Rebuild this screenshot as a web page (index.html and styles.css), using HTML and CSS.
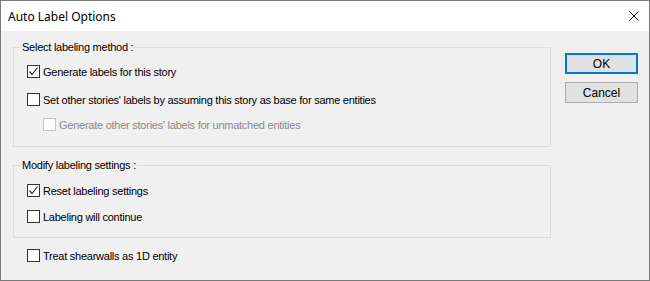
FILE: index.html
```html
<!DOCTYPE html>
<html lang="en">
<head>
  <meta charset="UTF-8">
  <title>Auto Label Options</title>
  <link rel="stylesheet" href="styles.css">
</head>
<body>
  <div class="window">
    <div class="titlebar">
      <span class="title">Auto Label Options</span>
      <svg class="close" width="10" height="10" viewBox="0 0 10 10">
        <path d="M0.5 0.5 L9.5 9.5 M9.5 0.5 L0.5 9.5" stroke="#000" stroke-width="1" fill="none"/>
      </svg>
    </div>

    <div class="content">
      <div class="options">
        <fieldset class="group first">
          <legend>Select labeling method :</legend>
          <label class="row">
            <span class="box checked"></span>
            <span>Generate labels for this story</span>
          </label>
          <label class="row gap15">
            <span class="box"></span>
            <span>Set other stories' labels by assuming this story as base for same entities</span>
          </label>
          <label class="row sub gap12 disabled">
            <span class="box"></span>
            <span>Generate other stories' labels for unmatched entities</span>
          </label>
        </fieldset>

        <fieldset class="group second">
          <legend>Modify labeling settings :</legend>
          <label class="row">
            <span class="box checked"></span>
            <span>Reset labeling settings</span>
          </label>
          <label class="row gap13">
            <span class="box"></span>
            <span>Labeling will continue</span>
          </label>
        </fieldset>

        <label class="row single">
          <span class="box"></span>
          <span>Treat shearwalls as 1D entity</span>
        </label>
      </div>

      <div class="buttons">
        <button class="btn default">OK</button>
        <button class="btn">Cancel</button>
      </div>
    </div>
  </div>
</body>
</html>
```

FILE: styles.css
```css
body {
  margin: 0;
  font-family: "Liberation Sans", Arial, sans-serif;
  font-size: 11px;
  letter-spacing: -0.25px;
  color: #000;
}

.window {
  width: 650px;
  height: 281px;
  box-sizing: border-box;
  border: 1px solid #7a7a7a;
  background: #f0f0f0;
  display: flex;
  flex-direction: column;
}

.titlebar {
  height: 30px;
  background: #fff;
  display: flex;
  align-items: center;
  justify-content: space-between;
  padding: 0 10px 0 7px;
}

.title {
  font-family: "Noto Sans", sans-serif;
  font-size: 12px;
  letter-spacing: 0;
}

.content {
  display: flex;
  padding: 0 11px 0 12px;
}

.options {
  width: 539px;
}

.group {
  margin: 0;
  border: 1px solid #dcdcdc;
  padding: 0 0 0 13px;
}

.group legend {
  line-height: 13px;
  padding: 0 1px;
  margin-left: -6px;
}

.first {
  margin-top: 10px;
  padding-top: 11px;
  padding-bottom: 15px;
}

.second {
  margin-top: 12px;
  padding-top: 12px;
  padding-bottom: 14px;
}

.row {
  display: flex;
  align-items: center;
  height: 13px;
  gap: 3px;
}

.gap15 { margin-top: 15px; }
.gap13 { margin-top: 13px; }
.gap12 { margin-top: 12px; }

.sub {
  padding-left: 16px;
}

.single {
  margin-top: 11px;
  padding-left: 14px;
}

.box {
  width: 13px;
  height: 13px;
  box-sizing: border-box;
  border: 1px solid #333;
  background: #fff;
  flex: none;
}

.box.checked {
  background: #fff url("data:image/svg+xml,%3Csvg xmlns='http://www.w3.org/2000/svg' width='11' height='11'%3E%3Cpath d='M1.5 5.5 L4 8.5 L9.5 1.5' stroke='%23333' stroke-width='1.2' fill='none'/%3E%3C/svg%3E") no-repeat center;
}

.disabled {
  color: #8a8a8a;
}

.disabled .box {
  border-color: #c4c4c4;
}

.buttons {
  margin-left: 14px;
  padding-top: 22px;
  display: flex;
  flex-direction: column;
  gap: 8px;
}

.btn {
  width: 73px;
  height: 21px;
  box-sizing: border-box;
  background: #e1e1e1;
  border: 1px solid #adadad;
  font-family: "Liberation Sans", Arial, sans-serif;
  font-size: 12px;
  color: #000;
  padding: 0;
}

.btn.default {
  border: 2px solid #0078d7;
}
```
